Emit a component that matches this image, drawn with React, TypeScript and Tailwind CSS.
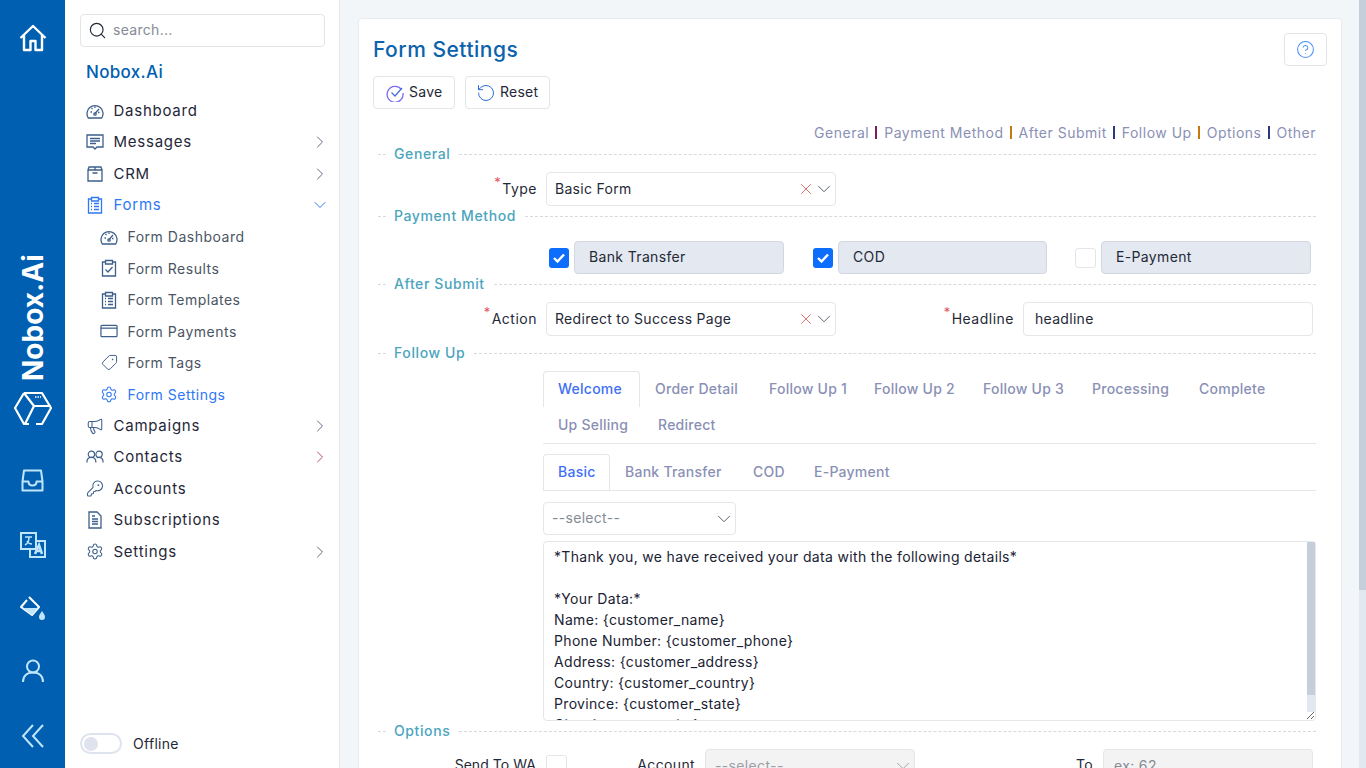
import type { ReactNode } from "react";
import { ChevronDown, ChevronRight, CircleHelp, KeyRound, Megaphone, RotateCcw, Search, Settings, Tag, X } from "lucide-react";

const font = "font-['Inter','Liberation_Sans',sans-serif]";

function RailIcon({ children, className }: { children: ReactNode; className: string }) {
  return <div className={`flex w-full justify-center ${className}`}>{children}</div>;
}

function Rail() {
  return (
    <aside className="flex h-screen w-[65px] shrink-0 flex-col items-center bg-[#005fb1]">
      <RailIcon className="mt-[24px] h-[28px]">
        <svg width="28" height="28" viewBox="0 0 28 28" fill="none" stroke="#fff" strokeWidth="2.4" strokeLinejoin="round">
          <path d="M1.5 14 14 2l12.5 12M5 11v15h6.5v-9h5v9H23V11" />
        </svg>
      </RailIcon>
      <div className="mt-[203px] flex h-[125px] rotate-180 items-center justify-center text-[28px] font-bold leading-none text-white [writing-mode:vertical-rl]">
        Nobox.Ai
      </div>
      <RailIcon className="mt-[12px] h-[34px]">
        <svg width="38" height="34" viewBox="0 0 38 34" fill="none" stroke="#fff" strokeWidth="2.2" strokeLinejoin="round">
          <path d="M10 1h18l9 15-9 16h-6M15 32h-5L1 16 10 1M10 1l10 13h17M20 14l-9 18" />
          <path d="M21 5h6" strokeWidth="1.5" strokeDasharray="1.5 1" />
        </svg>
      </RailIcon>
      <RailIcon className="mt-[43px] h-[23px]">
        <svg width="23" height="23" viewBox="0 0 23 23" fill="none" stroke="#bfe6fb" strokeWidth="2" strokeLinejoin="round">
          <path d="M3 1.5h17l1.5 11v9h-20v-9ZM2 12.5h5.5c0 3 1.5 4 4 4s4-1 4-4H21" />
        </svg>
      </RailIcon>
      <RailIcon className="mt-[40px] h-[26px]">
        <svg width="26" height="26" viewBox="0 0 26 26" fill="none" stroke="#bfe6fb" strokeWidth="2">
          <path d="M1 1h15v16H1zM16 9h9v16H10v-8" />
          <path d="M5 5h7M9 5c0 4-2 7-4 8M7 9c1 2 3 3 5 3" strokeWidth="1.5" />
          <path d="M15 22 19 13l3 9M16 19h5" strokeWidth="2.5" />
        </svg>
      </RailIcon>
      <RailIcon className="mt-[38px] h-[26px]">
        <svg width="26" height="26" viewBox="0 0 26 26" fill="none">
          <path d="M9 1 19 11 12 19 1 11l6-7" stroke="#fff" strokeWidth="2" strokeLinejoin="round" />
          <path d="M3 12h15l-6 7Z" fill="#bfe6fb" />
          <path d="M22 15c-2 3-3 4-3 6a3 3 0 0 0 6 0c0-2-1-3-3-6Z" fill="#bfe6fb" />
        </svg>
      </RailIcon>
      <RailIcon className="mt-[37px] h-[24px]">
        <svg width="24" height="24" viewBox="0 0 24 24" fill="none" stroke="#bfe6fb" strokeWidth="2">
          <circle cx="12" cy="7.5" r="6" />
          <path d="M2 23c0-6 4-9.5 10-9.5S22 17 22 23" />
        </svg>
      </RailIcon>
      <RailIcon className="mt-[41px] h-[24px]">
        <svg width="24" height="24" viewBox="0 0 24 24" fill="none" stroke="#bfe6fb" strokeWidth="2">
          <path d="M12 1 2 12l10 11M22 1 12 12l10 11" />
        </svg>
      </RailIcon>
    </aside>
  );
}

function GaugeIcon() {
  return (
    <svg width="18" height="16" viewBox="0 0 18 16" fill="none" stroke="currentColor" strokeWidth="1.3">
      <path d="M2.3 15a8 8 0 1 1 13.4 0Z" />
      <path d="M9 10.5 13 6M4.5 9h1.5M12 9.5h1.5M9 3.5V5M5.5 5l1 1" />
      <circle cx="9" cy="11" r="1.2" />
    </svg>
  );
}

function MessagesIcon() {
  return (
    <svg width="18" height="18" viewBox="0 0 18 18" fill="none" stroke="currentColor" strokeWidth="1.3">
      <path d="M1 2h16v12h-6l-2 2-2-2H1Z" />
      <path d="M4 5.5h10M4 8h10M4 10.5h6" />
    </svg>
  );
}

function CrmIcon() {
  return (
    <svg width="18" height="18" viewBox="0 0 18 18" fill="none" stroke="currentColor" strokeWidth="1.3">
      <path d="M2 5h14v11H2ZM2 5l1-3h12l1 3M9 2v3M6.5 8h5" />
    </svg>
  );
}

function ClipboardIcon({ check, size = 18 }: { check?: boolean; size?: number }) {
  return (
    <svg width={size} height={size} viewBox="0 0 18 18" fill="none" stroke="currentColor" strokeWidth="1.3">
      <path d="M5.5 3H2.5v14h13V3h-3M5.5 1.5h7V5h-7Z" />
      {check ? <path d="m5.5 10.5 2.5 2.5 4.5-5" /> : <path d="M5 7.5h1M8 7.5h5M5 10.5h1M8 10.5h5M5 13.5h1M8 13.5h5" />}
    </svg>
  );
}

function CardIcon() {
  return (
    <svg width="19" height="16" viewBox="0 0 19 16" fill="none" stroke="currentColor" strokeWidth="1.3">
      <rect x="1" y="2" width="17" height="12" rx="1" />
      <path d="M1 5h17" />
    </svg>
  );
}

function UsersIcon() {
  return (
    <svg width="20" height="16" viewBox="0 0 20 16" fill="none" stroke="currentColor" strokeWidth="1.3">
      <circle cx="6" cy="5" r="3.5" />
      <circle cx="14.5" cy="5" r="3.5" />
      <path d="M1 14c0-3.500 2-5.500 5-5.500s5 2 5 5.500M12 8.700c.7-.2 1.500-.2 2.500-.2 3 0 4.500 2 4.500 5.500" />
    </svg>
  );
}

function DocIcon() {
  return (
    <svg width="18" height="18" viewBox="0 0 18 18" fill="none" stroke="currentColor" strokeWidth="1.3">
      <path d="M3 1h8l4 4v12H3Z" />
      <path d="M6 5h3M6 8h6M6 10.500h6M6 13h6" />
    </svg>
  );
}

type NavItem = {
  label: string;
  icon: ReactNode;
  sub?: boolean;
  active?: boolean;
  arrow?: "right" | "down" | "red";
};

const nav: NavItem[] = [
  { label: "Dashboard", icon: <GaugeIcon /> },
  { label: "Messages", icon: <MessagesIcon />, arrow: "right" },
  { label: "CRM", icon: <CrmIcon />, arrow: "right" },
  { label: "Forms", icon: <ClipboardIcon size={20} />, active: true, arrow: "down" },
  { label: "Form Dashboard", icon: <GaugeIcon />, sub: true },
  { label: "Form Results", icon: <ClipboardIcon check />, sub: true },
  { label: "Form Templates", icon: <ClipboardIcon />, sub: true },
  { label: "Form Payments", icon: <CardIcon />, sub: true },
  { label: "Form Tags", icon: <Tag size={17} strokeWidth={1.4} className="rotate-90" />, sub: true },
  { label: "Form Settings", icon: <Settings size={19} strokeWidth={1.4} />, sub: true, active: true },
  { label: "Campaigns", icon: <Megaphone size={20} strokeWidth={1.4} />, arrow: "right" },
  { label: "Contacts", icon: <UsersIcon />, arrow: "red" },
  { label: "Accounts", icon: <KeyRound size={19} strokeWidth={1.4} /> },
  { label: "Subscriptions", icon: <DocIcon /> },
  { label: "Settings", icon: <Settings size={19} strokeWidth={1.4} />, arrow: "right" },
];

function NavRow({ item }: { item: NavItem }) {
  const textColor = item.active ? "text-[#2f78f5]" : item.sub ? "text-[#4b5563]" : "text-[#1f2738]";
  const iconColor = item.active ? "text-[#2f78f5]" : "text-[#3d5f8c]";
  return (
    <div className={`flex h-[31.5px] items-center pr-[9px] ${item.sub ? "pl-[35px]" : "pl-[21px]"}`}>
      <span className={`flex w-[18px] shrink-0 justify-center ${iconColor}`}>{item.icon}</span>
      <span
        className={`ml-[9.5px] flex-1 ${textColor} ${item.sub ? "text-[14px] tracking-[0.5px]" : "text-[15px] tracking-[0.75px]"}`}
      >
        {item.label}
      </span>
      {item.arrow === "down" && <ChevronDown size={20} strokeWidth={1.2} className="text-[#2f78f5]" />}
      {item.arrow === "right" && <ChevronRight size={20} strokeWidth={1.2} className="text-[#5b6a85]" />}
      {item.arrow === "red" && <ChevronRight size={20} strokeWidth={1.2} className="text-[#b4525c]" />}
    </div>
  );
}

function Sidebar() {
  return (
    <aside className="flex h-screen w-[275px] shrink-0 flex-col border-r border-[#e5e7eb] bg-white pt-[14px]">
      <div className="mx-[15px] flex h-[33px] w-[245px] items-center rounded border border-[#e2e5e9] pl-[7px]">
        <Search size={19} strokeWidth={1.5} className="text-[#1f2937]" />
        <span className="ml-[6px] pb-[2px] text-[14px] tracking-[0.3px] text-[#858b96]">search...</span>
      </div>
      <div className="ml-[21px] mt-[13px] h-[24px] text-[17px] font-medium leading-[24px] tracking-[0.3px] text-[#005fb1]">
        Nobox.Ai
      </div>
      <nav className="mt-[11px]">
        {nav.map((item) => (
          <NavRow key={item.label} item={item} />
        ))}
      </nav>
      <div className="mb-[14px] ml-[15px] mt-auto flex items-center">
        <div className="flex h-[21px] w-[42px] items-center rounded-full border-2 border-[#dfe3ee] pl-[2px]">
          <div className="h-[14px] w-[14px] rounded-full bg-[#dfe3ee]" />
        </div>
        <span className="ml-[11px] text-[14px] tracking-[0.3px] text-[#1f2937]">Offline</span>
      </div>
    </aside>
  );
}

function Divider({ label, className }: { label: string; className: string }) {
  return (
    <div className={`flex h-[20px] items-center ${className}`}>
      <div className="ml-[5px] w-[8px] border-t border-dashed border-[#d6d9dd]" />
      <span className="ml-[8px] pb-[2px] text-[14px] font-medium tracking-[0.6px] text-[#4ba5bd]">{label}</span>
      <div className="ml-[9px] flex-1 border-t border-dashed border-[#d6d9dd]" />
    </div>
  );
}

function Required({ label, className }: { label: string; className: string }) {
  return (
    <div className={`flex shrink-0 justify-end pb-[2px] pr-[9px] text-[14px] tracking-[0.5px] text-[#1f2937] ${className}`}>
      <span className="mr-[1px] mt-[-5px] text-[13px] text-[#e0555f]">*</span>
      {label}
    </div>
  );
}

function ClearSelect({ value }: { value: string }) {
  return (
    <div className="flex h-[34px] w-[290px] shrink-0 items-center rounded border border-[#e4e6ea] pl-[8px] text-[14px] tracking-[0.3px] text-[#1f2937]">
      <span className="flex-1 pb-[2px]">{value}</span>
      <X size={18} strokeWidth={1.1} className="text-[#d9584f]" />
      <ChevronDown size={22} strokeWidth={1} className="-ml-[2px] text-[#4b5563]" />
    </div>
  );
}

function PaymentOption({ label, checked, className }: { label: string; checked: boolean; className: string }) {
  return (
    <div className={`flex items-center ${className}`}>
      <div
        className={`flex h-[20px] shrink-0 items-center justify-center rounded-[3px] ${
          checked ? "w-[20px] bg-[#0d6efd]" : "w-[21px] border border-[#e2e5e9] bg-white"
        }`}
      >
        {checked && (
          <svg width="12" height="10" viewBox="0 0 12 10" fill="none" stroke="#fff" strokeWidth="2.4">
            <path d="M1 5l3.500 3.500L11 1.500" />
          </svg>
        )}
      </div>
      <div className="ml-[5px] flex h-[33px] flex-1 items-center rounded border border-[#d3d8e0] bg-[#e4e8f0] pb-[2px] pl-[14px] text-[14px] tracking-[0.35px] text-[#1f2937]">
        {label}
      </div>
    </div>
  );
}

const jumpLinks = [
  { label: "General", bar: "bg-[#7a1f5c]" },
  { label: "Payment Method", bar: "bg-[#c47a10]" },
  { label: "After Submit", bar: "bg-[#2b3a80]" },
  { label: "Follow Up", bar: "bg-[#c47a10]" },
  { label: "Options", bar: "bg-[#2b3a80]" },
  { label: "Other", bar: "" },
];

const messageText = `*Thank you, we have received your data with the following details*

*Your Data:*
Name: {customer_name}
Phone Number: {customer_phone}
Address: {customer_address}
Country: {customer_country}
Province: {customer_state}
City: {customer_city}`;

const tabBase = "flex h-[36px] items-center pb-[2px] pl-[15px]";
const activeTabClass =
  "flex h-[36px] items-center rounded-t border border-b-0 border-[#e4e6ea] bg-white pb-[2px] pl-[14px] text-[#3e6ff5]";

function FormCard() {
  return (
    <section className="ml-[18px] mt-[18px] h-[982px] w-[984px] shrink-0 rounded border border-[#e9ecef] bg-white pl-[14px] pr-[25px] pt-[14px]">
      <div className="flex items-start justify-between">
        <h1 className="mt-[4px] text-[21px] font-medium leading-[26px] tracking-[0.5px] text-[#0b62ad]">Form Settings</h1>
        <div className="-mr-[11px] flex h-[33px] w-[43px] items-center justify-center rounded border border-[#e2e5e9]">
          <CircleHelp size={19} strokeWidth={1.3} className="text-[#4d8ff7]" />
        </div>
      </div>
      <div className="mt-[10px] flex gap-[10px]">
        <div className="flex h-[33px] w-[82px] items-center rounded border border-[#e2e5e9] pl-[12px] text-[14px] tracking-[0.25px] text-[#1f2937]">
          <svg width="18" height="18" viewBox="0 0 18 18" fill="none" strokeWidth="1.3">
            <path d="M15.500 5.500A8 8 0 1 0 17 9" stroke="#7c6cf0" />
            <path d="M5.500 8.500 9 12l7-8" stroke="#4d6ddb" />
          </svg>
          <span className="ml-[5px] pb-[2px]">Save</span>
        </div>
        <div className="flex h-[33px] w-[85px] items-center rounded border border-[#e2e5e9] pl-[10px] text-[14px] tracking-[0.25px] text-[#1f2937]">
          <RotateCcw size={20} strokeWidth={1.2} className="text-[#2f6fd6]" />
          <span className="ml-[4px] pb-[2px]">Reset</span>
        </div>
      </div>
      <div className="mt-[13px] flex h-[20px] items-center justify-end text-[14px] tracking-[0.5px] text-[#8a90b5]">
        {jumpLinks.map((link) => (
          <div key={link.label} className="flex items-center">
            <span>{link.label}</span>
            {link.bar && <span className={`ml-[6px] mr-[7px] h-[13px] w-[2px] ${link.bar}`} />}
          </div>
        ))}
      </div>
      <Divider label="General" className="mt-[2px]" />
      <div className="mt-[8px] flex h-[34px] items-center">
        <Required label="Type" className="w-[173px]" />
        <ClearSelect value="Basic Form" />
      </div>
      <Divider label="Payment Method" className="" />
      <div className="mt-[15px] flex h-[33px] pl-[176px]">
        <PaymentOption label="Bank Transfer" checked className="w-[235px]" />
        <PaymentOption label="COD" checked className="ml-[29px] w-[234px]" />
        <PaymentOption label="E-Payment" checked={false} className="ml-[28px] w-[236px]" />
      </div>
      <Divider label="After Submit" className="" />
      <div className="mt-[8px] flex h-[34px] items-center">
        <Required label="Action" className="w-[173px]" />
        <ClearSelect value="Redirect to Success Page" />
        <Required label="Headline" className="w-[187px]" />
        <div className="flex h-[34px] w-[290px] items-center rounded border border-[#e4e6ea] pb-[2px] pl-[11px] text-[14px] tracking-[0.3px] text-[#1f2937]">
          headline
        </div>
      </div>
      <Divider label="Follow Up" className="mt-[7px]" />
      <div className="ml-[170px]">
        <div className="mt-[8px] flex h-[73px] flex-wrap border-b border-[#e4e6ea] text-[14px] font-medium tracking-[0.25px] text-[#8a90b5]">
          <span className={`${activeTabClass} w-[97px]`}>Welcome</span>
          <span className={`${tabBase} w-[114px]`}>Order Detail</span>
          <span className={`${tabBase} w-[105px]`}>Follow Up 1</span>
          <span className={`${tabBase} w-[109px]`}>Follow Up 2</span>
          <span className={`${tabBase} w-[109px]`}>Follow Up 3</span>
          <span className={`${tabBase} w-[107px]`}>Processing</span>
          <span className={`${tabBase} w-[99px]`}>Complete</span>
          <div className="flex w-full">
            <span className={`${tabBase} w-[100px]`}>Up Selling</span>
            <span className={`${tabBase} w-[90px]`}>Redirect</span>
          </div>
        </div>
        <div className="mt-[10px] flex h-[37px] border-b border-[#e4e6ea] text-[14px] font-medium tracking-[0.25px] text-[#8a90b5]">
          <span className={`${activeTabClass} w-[67px]`}>Basic</span>
          <span className={`${tabBase} w-[128px]`}>Bank Transfer</span>
          <span className={`${tabBase} w-[61px]`}>COD</span>
          <span className={`${tabBase} w-[110px]`}>E-Payment</span>
        </div>
        <div className="mt-[11px] flex h-[33px] w-[193px] items-center rounded border border-[#e4e6ea] pl-[8px] text-[14px] tracking-[0.3px] text-[#858b96]">
          <span className="flex-1 pb-[2px]">--select--</span>
          <ChevronDown size={22} strokeWidth={1} className="text-[#4b5563]" />
        </div>
        <div className="relative mt-[6px] h-[180px] w-[773px]">
          <textarea
            readOnly
            value={messageText}
            className="block h-full w-full overflow-hidden rounded border border-[#e4e6ea] px-[10px] pb-[5px] pt-[4px] text-[14px] leading-[21px] tracking-[0.33px] text-[#1a2233] outline-none"
          />
          <div className="absolute bottom-[9px] right-[1px] top-[1px] w-[8px] bg-[#e2e8f0]">
            <div className="h-[153px] bg-[#c5cedb]" />
          </div>
        </div>
      </div>
      <Divider label="Options" className="" />
      <div className="mt-[8px] flex h-[34px] items-start pb-[2px] text-[14px] tracking-[0.35px] text-[#1f2937]">
        <div className="mt-[3px] flex h-[24px] w-[173px] shrink-0 items-center justify-end pr-[10px] tracking-[0.05px]">Send To WA</div>
        <div className="mt-[6px] h-[20px] w-[21px] shrink-0 rounded-[3px] border border-[#e2e5e9]" />
        <div className="mt-[3px] flex h-[24px] w-[138px] shrink-0 items-center justify-end pr-[10px]">Account</div>
        <div className="flex h-[34px] w-[210px] shrink-0 items-center rounded border border-[#e4e6ea] bg-[#f3f3f3] pl-[9px] text-[#9a9ea6]">
          <span className="flex-1 pb-[2px]">--select--</span>
          <ChevronDown size={22} strokeWidth={1} className="text-[#9a9ea6]" />
        </div>
        <div className="mt-[3px] flex h-[24px] w-[188px] shrink-0 items-center justify-end pr-[10px]">To</div>
        <div className="flex h-[34px] w-[210px] shrink-0 items-center rounded border border-[#e4e6ea] bg-[#f3f3f3] pb-[2px] pl-[10px] text-[#858b96]">ex: 62</div>
      </div>
    </section>
  );
}

export default function App() {
  return (
    <div className={`flex h-screen overflow-hidden ${font}`}>
      <Rail />
      <Sidebar />
      <main className="h-screen flex-1 overflow-hidden bg-[#f3f6f9]">
        <FormCard />
      </main>
      <div className="h-screen w-[7px] shrink-0 bg-[#e2e8f0]">
        <div className="h-[590px] bg-[#c5cedb]" />
      </div>
    </div>
  );
}
